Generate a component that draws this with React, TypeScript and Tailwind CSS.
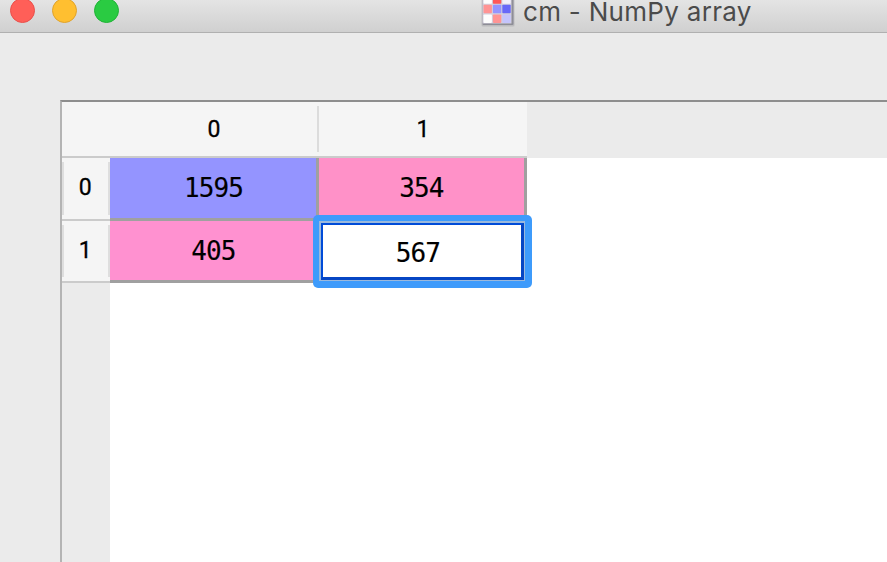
const iconCells = [
  '#fdfdfd', '#ff5757', '#f4f0fa',
  '#ff9494', '#9494ff', '#6868f8',
  '#fdfdfd', '#ff9494', '#c4c4fc',
];

function ArrayIcon() {
  return (
    <svg className="block h-8 w-9 shrink-0" viewBox="0 0 36 32">
      <rect x="1.5" y="-6" width="33" height="32.5" rx="1.5" fill="#808087" opacity="0.3" />
      <rect x="2.5" y="-6" width="31" height="31" rx="1" fill="#85858f" opacity="0.85" />
      <rect x="2.5" y="-6" width="29" height="29.5" fill="#d3d0dc" />
      {iconCells.map((c, i) => (
        <rect key={i} x={3.5 + (i % 3) * 9.4} y={-4.8 + Math.floor(i / 3) * 9.6} width="8.4" height="8.5" rx="0.8" fill={c} />
      ))}
    </svg>
  );
}

function TitleBar() {
  return (
    <header className="relative h-[33px] shrink-0 overflow-hidden border-b border-[#b0b0b0] bg-linear-to-b from-[#e4e4e4] to-[#d0d0d0]">
      <div className="-mt-[2.4px] ml-[10px] flex gap-[16.6px]">
        <span className="size-[25.4px] rounded-full border border-[#e9504b] bg-[#ff5f58]" />
        <span className="size-[25.4px] rounded-full border border-[#e0a32c] bg-[#ffbf30]" />
        <span className="size-[25.4px] rounded-full border border-[#20b337] bg-[#2acb42]" />
      </div>
      <div className="absolute top-0 left-[480px] flex">
        <ArrayIcon />
        <h1 className="ml-[7px] font-['Inter',sans-serif] text-[26px] leading-6 tracking-[0.3px] whitespace-nowrap text-[#4b4b4b]">
          cm - NumPy array
        </h1>
      </div>
    </header>
  );
}

function RowHeader({ label }: { label: string }) {
  return (
    <div className="flex w-[48.5px] shrink-0 flex-col border-b-2 border-[#cbcbcb] bg-[#f5f5f5] py-1">
      <div className="mr-px flex flex-1 items-center justify-center border-x-2 border-[#dedede] pr-px font-['Roboto',sans-serif] text-[23px] text-black [-webkit-text-stroke:0.3px_black]">
        {label}
      </div>
    </div>
  );
}

export default function App() {
  return (
    <div className="flex h-[562px] w-[887px] flex-col overflow-hidden bg-[#ebebeb]">
      <TitleBar />
      <main className="mt-[67px] ml-[60px] flex flex-1 flex-col border-t-2 border-l-2 border-t-[#8e8e8e] border-l-[#b4b4b4]">
        <div className="flex h-14 shrink-0">
          <div className="flex w-[465px] border-b-2 border-[#cbcbcb] bg-[#f5f5f5] pl-12 font-['Roboto',sans-serif] text-[23px] leading-[56px] text-black [-webkit-text-stroke:0.3px_black]">
            <div className="w-[207px] pl-px text-center">0</div>
            <div className="mt-1 mb-1 w-0.5 bg-[#dcdcdc]" />
            <div className="flex-1 text-center">1</div>
          </div>
        </div>
        <div className="flex flex-1">
          <div className="flex w-[48px] shrink-0 flex-col">
            <div className="flex h-[63px]"><RowHeader label="0" /></div>
            <div className="flex h-[62px]"><RowHeader label="1" /></div>
          </div>
          <div className="flex-1 bg-white font-['DejaVu_Sans_Mono',monospace] text-[26px] leading-[61px] tracking-[-0.9px] text-black [-webkit-text-stroke:0.15px_black]">
            <div className="flex h-[63px]">
              <div className="w-[209px] border-r-[3px] border-b-[3px] border-[#a0a0a0] bg-[#9494ff] pl-px text-center">1595</div>
              <div className="w-[208px] border-r-[3px] border-b-[3px] border-[#a0a0a0] bg-[#ff91c8] text-center">354</div>
            </div>
            <div className="flex h-[62px]">
              <div className="w-[209px] border-r-[3px] border-b-[3px] border-[#a0a0a0] bg-[#ff91d0] pl-px text-center">405</div>
              <div className="relative w-[208px]">
                <div className="absolute -top-1.5 -left-1.5 h-[73px] w-[218.5px] rounded-[5px] bg-[#3e9bfb] pt-1.5 pr-[6.5px] pb-[7px] pl-1.5">
                  <div className="h-full border-t-2 border-r border-b border-l-2 border-[#9bb9dc]">
                    <div className="h-full border-t-2 border-r-[3px] border-b-[3px] border-l-2 border-t-[#004bd8] border-r-[#0646c4] border-b-[#0646c4] border-l-[#004bd8] bg-white pr-[8px] text-center leading-[57px]">
                      567
                    </div>
                  </div>
                </div>
              </div>
            </div>
          </div>
        </div>
      </main>
    </div>
  );
}
